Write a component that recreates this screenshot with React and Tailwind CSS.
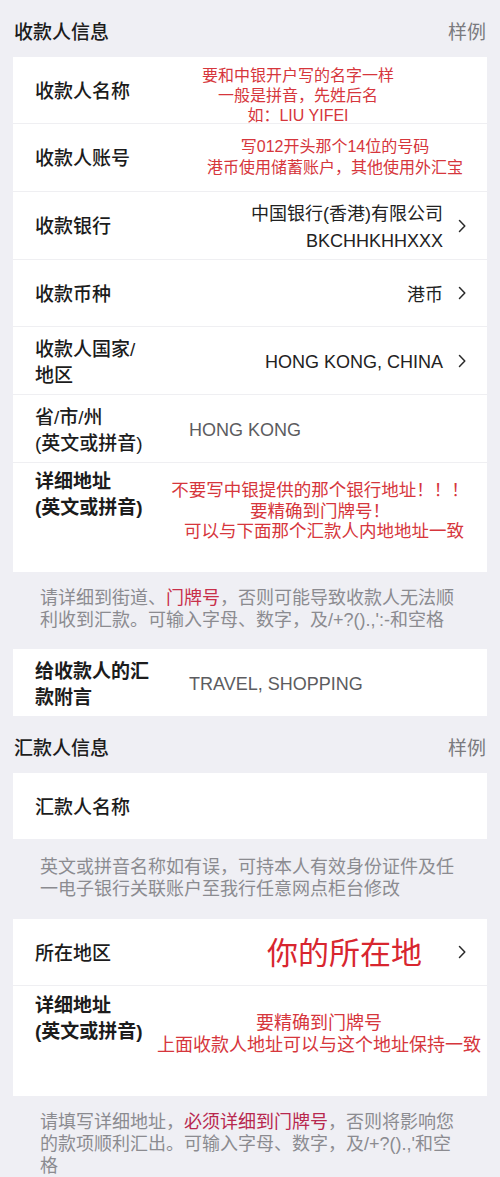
import React from "react";

const FONT = { fontFamily: '"Liberation Sans", "Noto Sans CJK SC", "Noto Sans", sans-serif' };

function Chevron() {
  return (
    <svg width="8" height="14" viewBox="0 0 8 14" className="shrink-0">
      <polyline points="1.5,1.5 6.8,7 1.5,12.5" fill="none" stroke="#2a2a2a" strokeWidth="1.5" strokeLinecap="round" strokeLinejoin="round" />
    </svg>
  );
}

function Header({ title }) {
  return (
    <div className="h-[57px] flex items-center justify-between pl-[1px] pr-[1px] pt-[9px]">
      <span className="text-[19px] font-medium text-[#1c1c1c]">{title}</span>
      <span className="text-[19px] text-[#7a7a7e]">样例</span>
    </div>
  );
}

function Hint({ children, className = "" }) {
  return (
    <div className={`pl-[27px] pr-[20px] text-[18px] leading-[22px] text-[#8b8b90] whitespace-nowrap ${className}`}>{children}</div>
  );
}

const sep = "border-b border-[#efeff2]";

export default function App() {
  return (
    <div style={FONT} className="w-[500px] min-h-[1177px] bg-[#efeff4] px-[13px] pb-[10px]">
      <Header title="收款人信息" />

      <div className="bg-white">
        {/* 收款人名称 */}
        <div className={`h-[67px] flex items-center pl-[22px] pt-[4px] ${sep}`}>
          <div className="w-[115px] shrink-0 text-[19px] font-medium text-[#1c1c1c]">收款人名称</div>
          <div className="w-[296px] text-center text-[16px] leading-[20px] text-[#d6363c] pt-[7px] whitespace-nowrap">
            <div>要和中银开户写的名字一样</div>
            <div>一般是拼音，先姓后名</div>
            <div>如：LIU YIFEI</div>
          </div>
        </div>
        {/* 收款人账号 */}
        <div className={`h-[68px] flex items-center pl-[22px] pt-[4px] ${sep}`}>
          <div className="w-[155px] shrink-0 text-[19px] font-medium text-[#1c1c1c]">收款人账号</div>
          <div className="w-[300px] ml-[-5px] text-center text-[16px] leading-[21px] text-[#d6363c] pb-[5px] whitespace-nowrap">
            <div>写012开头那个14位的号码</div>
            <div>港币使用储蓄账户，其他使用外汇宝</div>
          </div>
        </div>
        {/* 收款银行 */}
        <div className={`h-[68px] flex items-center pl-[22px] pr-[21px] pt-[4px] ${sep}`}>
          <div className="shrink-0 text-[19px] font-medium text-[#1c1c1c]">收款银行</div>
          <div className="flex-1 text-right text-[18px] leading-[27px] text-[#222]">
            <div>中国银行(香港)有限公司</div>
            <div>BKCHHKHHXXX</div>
          </div>
          <div className="ml-[15px] -mt-[4px]"><Chevron /></div>
        </div>
        {/* 收款币种 */}
        <div className={`h-[67px] flex items-center pl-[22px] pr-[21px] pt-[4px] ${sep}`}>
          <div className="shrink-0 text-[19px] font-medium text-[#1c1c1c]">收款币种</div>
          <div className="flex-1 text-right text-[18px] text-[#222]">港币</div>
          <div className="ml-[15px] -mt-[4px]"><Chevron /></div>
        </div>
        {/* 收款人国家/地区 */}
        <div className={`h-[68px] flex items-center pl-[22px] pr-[21px] pt-[4px] ${sep}`}>
          <div className="shrink-0 text-[19px] leading-[26px] font-medium text-[#1c1c1c]">
            <div>收款人国家/</div>
            <div>地区</div>
          </div>
          <div className="flex-1 text-right text-[18px] text-[#222]">HONG KONG, CHINA</div>
          <div className="ml-[15px] -mt-[4px]"><Chevron /></div>
        </div>
        {/* 省/市/州 */}
        <div className={`h-[68px] flex items-center pl-[22px] pt-[4px] ${sep}`}>
          <div className="w-[154px] shrink-0 text-[19px] leading-[26px] font-medium text-[#1c1c1c]">
            <div>省/市/州</div>
            <div>(英文或拼音)</div>
          </div>
          <div className="text-[18px] text-[#5c5c60]">HONG KONG</div>
        </div>
        {/* 详细地址 */}
        <div className="h-[109px] flex items-start pl-[22px]">
          <div className="w-[133px] shrink-0 pt-[6px] text-[19px] leading-[26px] font-semibold text-[#1c1c1c]">
            <div>详细地址</div>
            <div>(英文或拼音)</div>
          </div>
          <div className="w-[304px] pt-[17px] text-center text-[17.5px] leading-[20.5px] text-[#d6363c] whitespace-nowrap">
            <div>不要写中银提供的那个银行地址！！！</div>
            <div>要精确到门牌号！</div>
            <div className="pl-[8px]">可以与下面那个汇款人内地地址一致</div>
          </div>
        </div>
      </div>

      <Hint className="pt-[15px] pb-[18px]">
        <div>请详细到街道、<span className="text-[#c8304a]">门牌号</span>，否则可能导致收款人无法顺</div>
        <div>利收到汇款。可输入字母、数字，及/+?().,':-和空格</div>
      </Hint>

      <div className="bg-white h-[67px] flex items-center pl-[22px] pt-[4px]">
        <div className="w-[154px] shrink-0 text-[19px] leading-[26px] font-semibold text-[#1c1c1c]">
          <div>给收款人的汇</div>
          <div>款附言</div>
        </div>
        <div className="text-[18px] text-[#5c5c60]">TRAVEL, SHOPPING</div>
      </div>

      <Header title="汇款人信息" />

      <div className="bg-white h-[66px] flex items-center pl-[22px] pt-[4px]">
        <div className="text-[19px] font-medium text-[#1c1c1c]">汇款人名称</div>
      </div>

      <Hint className="pt-[17px] pb-[19px]">
        <div>英文或拼音名称如有误，可持本人有效身份证件及任</div>
        <div>一电子银行关联账户至我行任意网点柜台修改</div>
      </Hint>

      <div className="bg-white">
        <div className={`h-[67px] flex items-center pl-[22px] pr-[21px] pt-[4px] ${sep}`}>
          <div className="w-[232px] shrink-0 text-[19px] font-medium text-[#1c1c1c]">所在地区</div>
          <div className="text-[31px] leading-[36px] text-[#d8262f]">你的所在地</div>
          <div className="ml-auto -mt-[4px]"><Chevron /></div>
        </div>
        <div className="h-[110px] flex items-start pl-[22px]">
          <div className="w-[120px] shrink-0 pt-[7px] text-[19px] leading-[26px] font-semibold text-[#1c1c1c]">
            <div>详细地址</div>
            <div>(英文或拼音)</div>
          </div>
          <div className="w-[328px] pt-[26px] text-center text-[18px] leading-[22px] text-[#d6363c] whitespace-nowrap">
            <div>要精确到门牌号</div>
            <div>上面收款人地址可以与这个地址保持一致</div>
          </div>
        </div>
      </div>

      <Hint className="pt-[15px]">
        <div>请填写详细地址，<span className="text-[#b8284e]">必须详细到门牌号</span>，否则将影响您</div>
        <div>的款项顺利汇出。可输入字母、数字，及/+?().,'和空</div>
        <div>格</div>
      </Hint>
    </div>
  );
}
